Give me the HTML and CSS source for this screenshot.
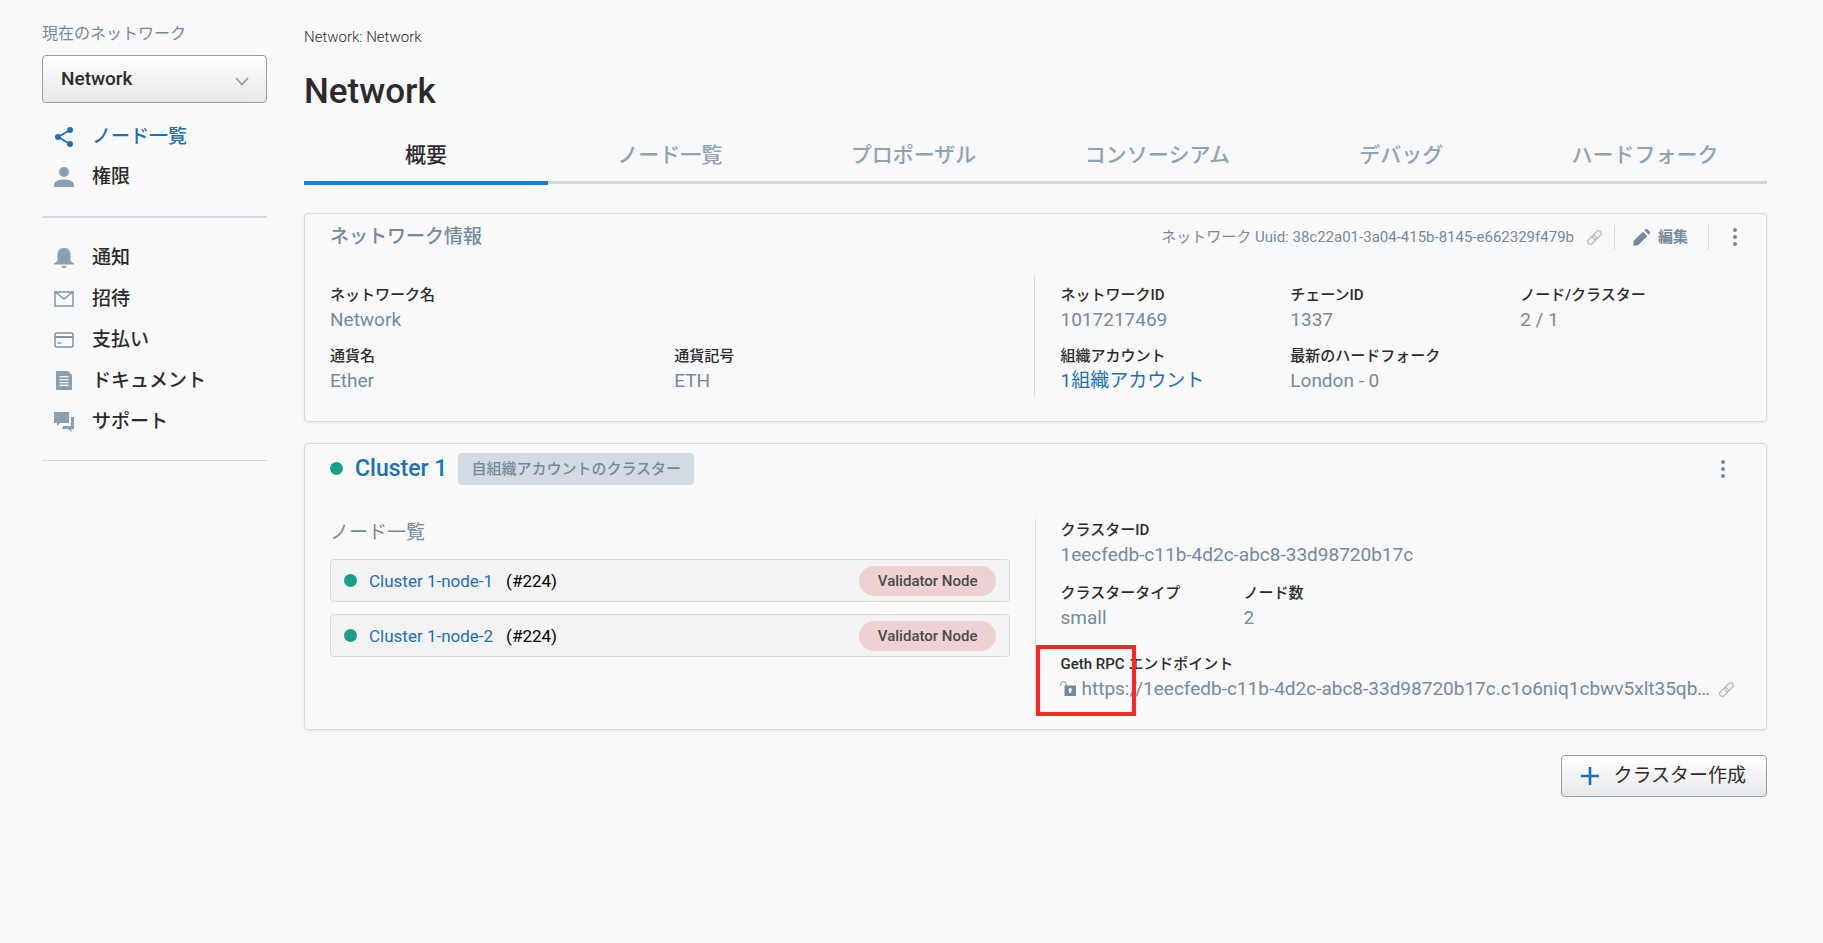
FILE: index.html
```html
<!DOCTYPE html>
<html lang="ja">
<head>
<meta charset="utf-8">
<title>Network</title>
<link rel="stylesheet" href="styles.css">
</head>
<body>
<svg class="sprite" aria-hidden="true">
  <symbol id="link" viewBox="0 0 16 16">
    <g transform="rotate(-45 8 8)" fill="none" stroke="currentColor" stroke-width="1.5">
      <rect x="-1" y="5.2" width="10.500" height="5.600" rx="2.800"/>
      <rect x="6.500" y="5.2" width="10.500" height="5.600" rx="2.800"/>
    </g>
  </symbol>
  <symbol id="dots" viewBox="0 0 4 18">
    <circle cx="2" cy="2" r="2"/><circle cx="2" cy="9" r="2"/><circle cx="2" cy="16" r="2"/>
  </symbol>
</svg>
<div class="page">
  <aside class="sidebar">
    <label class="picker-label" for="network">現在のネットワーク</label>
    <div class="picker">
      <select id="network"><option>Network</option></select>
      <svg class="chevron" viewBox="0 0 14 9"><path d="M1 1l6 6.500l6-6.500" fill="none" stroke="currentColor" stroke-width="1.800"/></svg>
    </div>
    <nav class="menu menu-main">
      <a class="item active" href="#"><svg viewBox="0 0 20 20"><path d="M16 3L4 10l12 7" fill="none" stroke="currentColor" stroke-width="1.700"/><circle cx="16" cy="3" r="3"/><circle cx="4" cy="10" r="3"/><circle cx="16" cy="17" r="3"/></svg>ノード一覧</a>
      <a class="item" href="#"><svg viewBox="0 0 20 20"><circle cx="10" cy="5" r="5"/><path d="M0 20v-2.500c0-3.400 5-5 10-5s10 1.600 10 5V20z"/></svg>権限</a>
    </nav>
    <nav class="menu">
      <a class="item" href="#"><svg viewBox="0 0 20 20"><path d="M10 0C6 0 3.500 2.700 3.500 6.500v6c0 1.500-3.500 2-3.500 3.500v.5h20V16c0-1.500-3.500-2-3.500-3.500v-6C16.500 2.700 14 0 10 0zM7.500 18h5c0 1.200-1 2-2.500 2s-2.500-.8-2.500-2z"/></svg>通知</a>
      <a class="item" href="#"><svg class="outline" viewBox="0 0 20 20"><path d="M1 3h18v14H1zM2 3.500l8 6.500l8-6.500"/></svg>招待</a>
      <a class="item" href="#"><svg class="outline" viewBox="0 0 20 20"><rect x="1" y="3" width="18" height="14" rx="1.500"/><path d="M1 7h18" stroke-width="2"/><path d="M3.500 13h4" stroke-width="1.500"/></svg>支払い</a>
      <a class="item" href="#"><svg viewBox="0 0 20 20"><path fill-rule="evenodd" d="M2 0h12l4 4v15H2zM5.500 5v1.300h9V5zm0 3v1.300h9V8zm0 3v1.300h9V11zm0 2.800v1.300h9v-1.300z"/></svg>ドキュメント</a>
      <a class="item" href="#"><svg viewBox="0 0 20 20"><path d="M0 0h15v11H6l-3 3v-3H0zM17 5h3v12h-2.500v3l-3.500-3H7.500l2-3H17z"/></svg>サポート</a>
    </nav>
  </aside>

  <main class="content">
    <div class="crumb">Network: Network</div>
    <h1>Network</h1>
    <nav class="tabs">
      <a class="tab current" href="#">概要</a>
      <a class="tab" href="#">ノード一覧</a>
      <a class="tab" href="#">プロポーザル</a>
      <a class="tab" href="#">コンソーシアム</a>
      <a class="tab" href="#">デバッグ</a>
      <a class="tab" href="#">ハードフォーク</a>
    </nav>

    <section class="card network">
      <header class="card-head">
        <h2>ネットワーク情報</h2>
        <div class="tools">
          <span class="uuid">ネットワーク Uuid: 38c22a01-3a04-415b-8145-e662329f479b</span>
          <button class="icon-btn copy" aria-label="コピー"><svg><use href="#link"/></svg></button>
          <button class="edit"><svg viewBox="0 0 18 18"><path d="M10.500 2.800l4.700 4.700L5.500 17.200l-5 .5v-4.900zM12 1.400l.8-.8c.8-.8 2-.8 2.800 0l1.800 1.800c.8.800.8 2 0 2.800l-.8.800z"/></svg>編集</button>
          <button class="icon-btn more" aria-label="メニュー"><svg><use href="#dots"/></svg></button>
        </div>
      </header>
      <div class="split">
        <dl class="facts facts-left">
          <div class="fact wide"><dt>ネットワーク名</dt><dd>Network</dd></div>
          <div class="fact"><dt>通貨名</dt><dd>Ether</dd></div>
          <div class="fact"><dt>通貨記号</dt><dd>ETH</dd></div>
        </dl>
        <dl class="facts facts-right">
          <div class="fact"><dt>ネットワークID</dt><dd>1017217469</dd></div>
          <div class="fact"><dt>チェーンID</dt><dd>1337</dd></div>
          <div class="fact"><dt>ノード/クラスター</dt><dd>2 / 1</dd></div>
          <div class="fact"><dt>組織アカウント</dt><dd><a href="#">1組織アカウント</a></dd></div>
          <div class="fact"><dt>最新のハードフォーク</dt><dd>London - 0</dd></div>
        </dl>
      </div>
    </section>

    <section class="card cluster">
      <header class="card-head">
        <div class="cluster-title">
          <span class="status"></span>
          <a class="cluster-name" href="#">Cluster 1</a>
          <span class="tag">自組織アカウントのクラスター</span>
        </div>
        <button class="icon-btn more" aria-label="メニュー"><svg><use href="#dots"/></svg></button>
      </header>
      <div class="split">
        <div class="nodes">
          <h3>ノード一覧</h3>
          <div class="node"><span class="status"></span><a href="#">Cluster 1-node-1</a><span class="num">(#224)</span><span class="pill">Validator Node</span></div>
          <div class="node"><span class="status"></span><a href="#">Cluster 1-node-2</a><span class="num">(#224)</span><span class="pill">Validator Node</span></div>
        </div>
        <dl class="facts details">
          <div class="fact wide"><dt>クラスターID</dt><dd>1eecfedb-c11b-4d2c-abc8-33d98720b17c</dd></div>
          <div class="fact"><dt>クラスタータイプ</dt><dd>small</dd></div>
          <div class="fact"><dt>ノード数</dt><dd>2</dd></div>
          <div class="fact wide rpc">
            <dt>Geth RPC エンドポイント</dt>
            <dd class="endpoint">
              <svg class="lock" viewBox="0 0 16 16"><path d="M.7 5V3.800C.7 2 2 .7 3.600.7S6.500 2 6.500 3.800V6" fill="none" stroke="currentColor" stroke-width="1.200" opacity=".7"/><path fill-rule="evenodd" d="M4.500 4.500H16V15H4.500zM10.200 7a1.800 1.800 0 0 0-1 3.200V12h2v-1.800a1.800 1.800 0 0 0-1-3.200z"/></svg>
              <span class="url">https://1eecfedb-c11b-4d2c-abc8-33d98720b17c.c1o6niq1cbwv5xlt35qb…</span>
              <button class="icon-btn copy" aria-label="コピー"><svg><use href="#link"/></svg></button>
              <span class="highlight"></span>
            </dd>
          </div>
        </dl>
      </div>
    </section>

    <div class="actions">
      <button class="create"><svg viewBox="0 0 18 18"><path d="M9 0v18M0 9h18" stroke="currentColor" stroke-width="2.600"/></svg>クラスター作成</button>
    </div>
  </main>
</div>
</body>
</html>
```

FILE: styles.css
```css
* { box-sizing: border-box; }
body {
  margin: 0;
  background: #f9f9f9;
  color: #2b2b2b;
  font: 19px/24px Roboto, "Noto Sans CJK JP", sans-serif;
}
h1, h2, h3, dl, dd { margin: 0; }
a { color: #1c6fb9; text-decoration: none; }
button { font: inherit; color: inherit; background: none; border: 0; padding: 0; }
svg { fill: currentColor; flex: none; }
.sprite { position: absolute; width: 0; height: 0; }

.page { display: flex; gap: 37px; padding: 20px 56px 40px 42px; }
.sidebar { flex: none; width: 225px; }
.picker-label { display: block; color: #738a9e; font-size: 16px; line-height: 28px; }
.picker { position: relative; margin-top: 7px; }
.picker select {
  appearance: none;
  display: block;
  width: 100%;
  height: 48px;
  padding: 0 18px;
  border: 1px solid #8c9fb0;
  border-radius: 4px;
  background: linear-gradient(#fff, #e8e8e8);
  color: #2b2b2b;
  font: 500 19px/24px Roboto, sans-serif;
}
.chevron { position: absolute; right: 18px; top: 22px; width: 14px; height: 9px; color: #8c9fb0; }
.menu { display: flex; flex-direction: column; padding: 19px 12px 18px; border-bottom: 1px solid #d3dae2; }
.menu-main { padding: 14px 12px 19px; border-bottom-width: 2px; }
.item { display: flex; align-items: center; gap: 18px; height: 41px; color: #2b2b2b; font-weight: 500; }
.menu-main .item { height: 40px; }
.item svg { width: 20px; height: 20px; color: #8c9fb0; }
.item.active, .item.active svg { color: #1c6fb9; }
.item .outline { fill: none; stroke: #8094a6; stroke-width: 1.5; }

.content { flex: 1; min-width: 0; }
.crumb { font-size: 15px; font-weight: 300; line-height: 34px; }
h1 { margin-top: 17px; font-size: 35px; line-height: 42px; font-weight: 500; }
.tabs { display: flex; margin-top: 11px; }
.tab {
  flex: 1;
  height: 60px;
  padding-top: 18px;
  border-bottom: 3px solid #cfd8df;
  color: #8fa3b4;
  font-size: 21px;
  line-height: 26px;
  font-weight: 500;
  text-align: center;
}
.tab.current { height: 61px; border-bottom: 4px solid #217bd2; color: #2b2b2b; }

.card { border: 1px solid #d3dae2; border-radius: 4px; box-shadow: 0 1px 3px rgba(60, 70, 90, .1); padding: 0 25px 24px; }
.network { margin-top: 28px; padding-right: 16px; }
.cluster { margin-top: 21px; padding-bottom: 15px; }
.card-head { display: flex; align-items: center; justify-content: space-between; height: 49px; }
.network .card-head { height: 46px; }
.card-head h2 { color: #738a9e; font-size: 19px; font-weight: 500; }
.tools { display: flex; align-items: center; color: #738a9e; }
.uuid { font-size: 15px; }
.icon-btn { display: flex; color: #738a9e; }
.copy svg { width: 15px; height: 15px; color: #b4bfca; }
.tools .copy { padding: 0 12px 0 13px; }
.edit { display: flex; align-items: center; gap: 8px; height: 25px; padding: 0 20px 0 18px; border: solid #d3dae2; border-width: 0 1px; font-size: 15px; font-weight: 700; }
.edit svg { width: 17px; height: 17px; }
.more svg { width: 4px; height: 18px; }
.tools .more { padding: 0 13px 0 24px; }

.split { display: grid; }
.network .split { margin-top: 15px; grid-template-columns: 704fr 715fr; }
.facts { display: grid; align-content: start; }
.fact dt { font-size: 15px; line-height: 22px; font-weight: 500; }
.fact dd { color: #738a9e; line-height: 28px; }
.wide { grid-column: 1 / -1; }
.facts-left { grid-template-columns: 1fr 1fr; padding: 9px 16px 2px 0; row-gap: 11px; }
.facts-right { grid-template-columns: repeat(3, 1fr); padding: 9px 0 2px 25px; row-gap: 11px; border-left: 1px solid #d3dae2; }

.status { flex: none; width: 13px; height: 13px; border-radius: 50%; background: #1a9e8a; }
.cluster-title { display: flex; align-items: center; }
.cluster-name { margin: 0 11px 0 12px; font-size: 23px; font-weight: 500; }
.tag { padding: 0 13px; border-radius: 4px; background: #d3dae2; color: #738a9e; font-size: 15px; line-height: 32px; font-weight: 500; }
.cluster .more { padding-right: 16px; }
.cluster .split { margin-top: 26px; grid-template-columns: 705fr 705fr; }
.nodes { display: flex; flex-direction: column; gap: 12px; padding-right: 25px; }
h3 { color: #738a9e; font-size: 19px; line-height: 28px; font-weight: 400; }
.node { display: flex; align-items: center; height: 43px; padding: 0 13px; border: 1px solid #d3dae2; border-radius: 4px; background: #f3f3f3; font-size: 17px; }
.node a { margin-left: 12px; }
.num { margin-left: 13px; color: #000; }
.pill { margin-left: auto; padding: 0 19px; border-radius: 15px; background: #eed2d3; color: #4a4a4a; font-size: 15px; line-height: 30px; font-weight: 500; }
.details { grid-template-columns: 183px 1fr; padding: 0 0 11px 24px; row-gap: 13px; border-left: 1px solid #d3dae2; }
.rpc { min-width: 0; margin-top: 8px; }
.endpoint { position: relative; display: flex; align-items: center; }
.lock { width: 16px; height: 16px; margin-right: 5px; }
.url { flex: 1; min-width: 0; overflow: hidden; text-overflow: ellipsis; white-space: nowrap; }
.endpoint .copy { padding: 0 7px 0 2px; }
.highlight { position: absolute; left: -24px; top: -30px; width: 100px; height: 71px; border: 4px solid #ff2720; }

.actions { display: flex; justify-content: flex-end; margin-top: 25px; }
.create { display: flex; align-items: center; gap: 14px; height: 42px; padding: 0 20px 0 19px; border: 1px solid #8c9fb0; border-radius: 4px; background: linear-gradient(#fff, #e8e8e8); }
.create svg { width: 18px; height: 18px; color: #1c6fb9; }
```
